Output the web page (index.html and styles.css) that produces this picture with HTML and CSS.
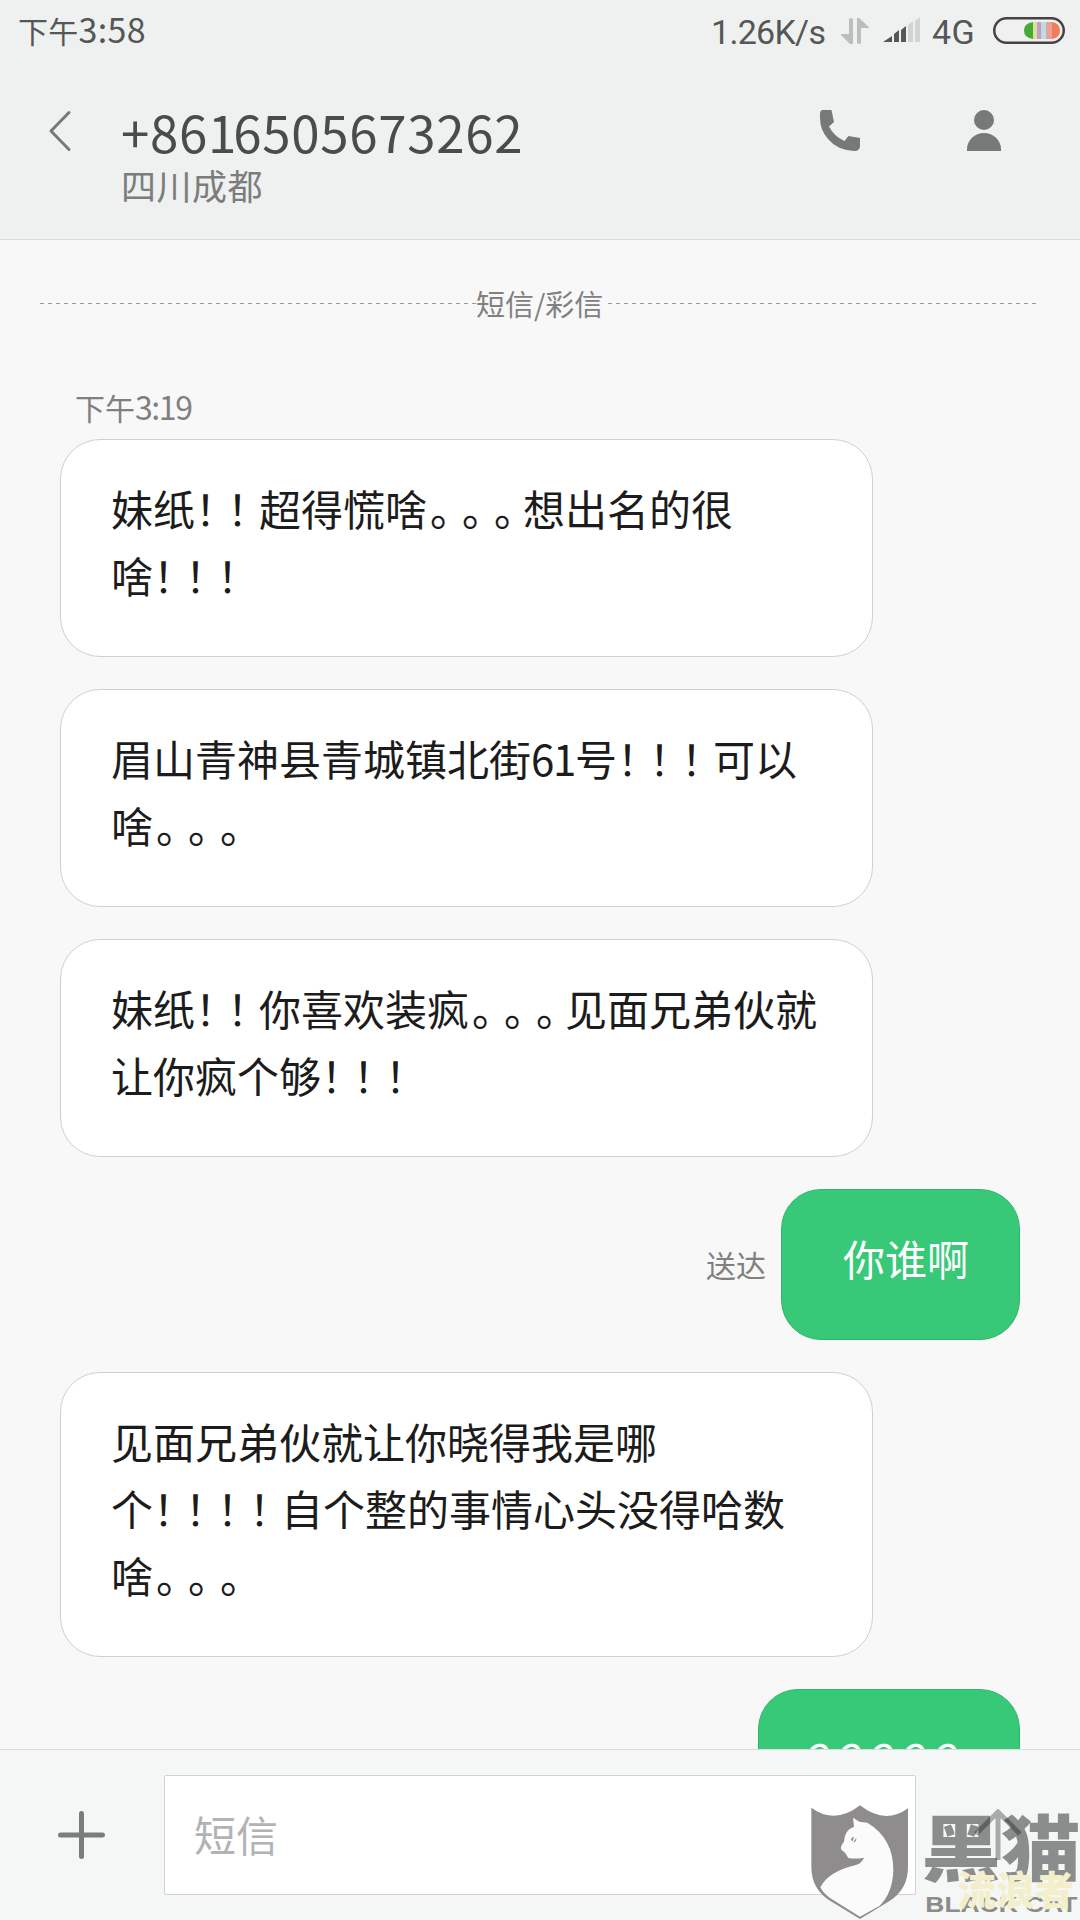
FILE: index.html
```html
<!DOCTYPE html>
<html lang="zh-CN">
<head>
<meta charset="utf-8">
<title>短信</title>
<link rel="stylesheet" href="styles.css">
</head>
<body>
<div class="screen">
  <header class="header">
    <div class="status">
      <div class="clock">下午<span class="clock-num">3:58</span></div>
      <div class="status-right">
        <span class="speed">1.26K/s</span>
        <svg class="traffic" width="28" height="28" viewBox="0 0 28 28" fill="#bcbebd"><path d="M8 2q0-2 2-2t2 2v24H9L0 17v-1h8zM16 2l0-2h2l10 9v1h-8v15q0 1-2 1t-2-2z"/></svg>
        <svg class="signal" width="38" height="26" viewBox="0 0 38 26"><path fill="#555756" d="M0 25l9-6v6zM11 17l5-4v12h-5zM18 13l5-4v16h-5z"/><path fill="#d2d4d3" d="M25 8l5-4v21h-5zM32 4l5-4v25h-5z"/></svg>
        <span class="net">4G</span>
        <svg class="battery" width="72" height="27" viewBox="0 0 72 27"><rect x="1.25" y="1.25" width="69.5" height="24.5" rx="12.25" fill="none" stroke="#474344" stroke-width="2.5"/><path fill="#48aa35" d="M40 5v17Q31 21 31 13.500T40 5z"/><path fill="#dfdf9c" d="M40 5h4v17h-4z"/><path fill="#c49ccb" d="M44 5h4.500v17H44z"/><path fill="#b9dfe3" d="M48.500 5H53v17h-4.500z"/><path fill="#eaa199" d="M53 5h6v17h-6z"/><path fill="#ef7d59" d="M59 5q8 1 8 8.500T59 22z"/></svg>
      </div>
    </div>
    <div class="titlebar">
      <svg class="back" width="24" height="44" viewBox="0 0 24 44"><path d="M21 3.500L3 22l18 18.500" fill="none" stroke="#777978" stroke-width="3" stroke-linecap="round" stroke-linejoin="round"/></svg>
      <div class="contact">
        <div class="number">+86<span class="one">1</span>6505673262</div>
        <div class="place">四川成都</div>
      </div>
      <svg class="phone" width="40" height="41" viewBox="0 0 40 41"><path fill="#777978" d="M2 0h9.500l2.500 12-5 4.500q5 10 15.500 14.500l4-5L40 28v8q0 5-6 5Q17 40 8 29 0 20 0 8V3q0-2 2-3z"/></svg>
      <svg class="person" width="34" height="41" viewBox="0 0 34 41" fill="#777978"><circle cx="17" cy="10" r="10"/><path d="M0 41v-2a17 16 0 0 1 34 0v2z"/></svg>
    </div>
  </header>

  <main class="thread">
    <div class="divider"><i class="dash"></i><span class="divider-label">短信/彩信</span><i class="dash dash-right"></i></div>
    <div class="time">下午<span class="time-num">3:19</span></div>
    <div class="bubble in">妹纸<span class="p">！！</span>超得慌啥<span class="p stop">。。。</span>想出名的很<br>啥<span class="p">！！！</span></div>
    <div class="bubble in">眉山青神县青城镇北街<span class="n">61</span>号<span class="p">！！！</span>可以<br>啥<span class="p stop">。。。</span></div>
    <div class="bubble in">妹纸<span class="p">！！</span>你喜欢装疯<span class="p stop">。。。</span>见面兄弟伙就<br>让你疯个够<span class="p">！！！</span></div>
    <div class="sent"><span class="state">送达</span><div class="bubble out">你谁啊</div></div>
    <div class="bubble in">见面兄弟伙就让你晓得我是哪<br>个<span class="p">！！！！</span>自个整的事情心头没得哈数<br>啥<span class="p stop">。。。</span></div>
    <div class="sent"><div class="bubble out questions"><span class="p">？？？？？</span></div></div>
  </main>

  <footer class="composer">
    <svg class="plus" width="47" height="48" viewBox="0 0 47 48"><path d="M23.500 2.500v43M2.500 24h42" stroke="#7b7d7c" stroke-width="5" stroke-linecap="round"/></svg>
    <div class="field">短信</div>
    <svg class="send" width="50" height="52" viewBox="0 0 50 52" fill="none" stroke="#a9abaa" stroke-width="5"><path d="M3 25L25 3l22 22M25 3v48"/></svg>
  </footer>

  <div class="watermark">
    <svg width="300" height="260" viewBox="0 0 900 780">
      <path fill="#8f8c8d" d="M94 443Q165 495 240 436Q315 495 384 445V620Q384 690 325 725L240 777L155 725Q94 690 94 620z"/>
      <path fill="#fff" fill-opacity=".97" d="M219 473l19 12 24 3Q340 535 340 630Q338 700 298 738L240 770L150 714Q130 700 121 682Q145 635 225 616Q245 610 252 593Q225 598 205 594Q198 578 183 568Q181 558 192 545Q193 510 222 500z"/>
      <path fill="#8f8c8d" d="M213 540q1-9 9-9l-4 13zM220 547q9 0 9-14z"/>
      <text class="brand" x="424" y="646" textLength="478" lengthAdjust="spacingAndGlyphs">黑猫</text>
      <text class="latin" x="436" y="755" textLength="456" lengthAdjust="spacingAndGlyphs">BLACK CAT</text>
      <text class="user" x="532" y="736" textLength="350" lengthAdjust="spacingAndGlyphs">流浪者</text>
    </svg>
  </div>
</div>
</body>
</html>
```
FILE: styles.css
```css
* { box-sizing: border-box; }

body {
  margin: 0;
  background: #f8f8f8;
  font-family: "Noto Sans CJK SC", sans-serif;
  text-spacing-trim: space-all;
  font-kerning: none;
}

svg { display: block; flex: none; }

.screen {
  position: relative;
  display: flex;
  flex-direction: column;
  width: 1080px;
  height: 1920px;
  overflow: hidden;
}

.header {
  flex: none;
  height: 240px;
  background: #eff1f0;
  border-bottom: 1px solid #d8dbda;
}

.status {
  display: flex;
  justify-content: space-between;
  align-items: center;
  height: 60px;
  padding: 0 15px 0 18px;
  color: #555756;
}

.clock { font-size: 30px; line-height: 58px; letter-spacing: .3px; }
.clock-num { font-size: 34px; line-height: 1; }

.status-right { display: flex; align-items: center; }
.speed, .net { font-family: Roboto, sans-serif; font-size: 34px; line-height: 60px; padding-top: 3px; }
.speed { width: 130px; letter-spacing: -.7px; }
.traffic { margin: 4px 0 0; }
.signal { margin-left: 14px; }
.net { width: 61px; margin-left: 11px; letter-spacing: .5px; }

.titlebar {
  display: flex;
  align-items: flex-start;
  padding-left: 48px;
}
.back { margin-top: 49px; }
.contact { width: 748px; padding-left: 49px; }
.number {
  margin-top: 38px;
  font-size: 51px;
  line-height: 66px;
  letter-spacing: .7px;
  color: #4a4c4b;
}
.one { letter-spacing: -3px; }
.place { margin-top: 1px; font-size: 35px; line-height: 40px; letter-spacing: .5px; color: #7b7d7c; }
.phone { margin: 50px 0 0; }
.person { margin: 50px 0 0 107px; }

.thread {
  display: flex;
  flex-direction: column;
  gap: 32px;
  height: 1509px;
  overflow: hidden;
  padding: 0 60px;
}

.divider {
  display: flex;
  align-items: center;
  flex: none;
  height: 40px;
  margin: 43px -20px 0;
  color: #808080;
}
.divider-label { font-size: 29px; line-height: 40px; }
.dash {
  width: 436px;
  height: 1px;
  background: repeating-linear-gradient(90deg, #999 0 4px, transparent 4px 8px);
}
.dash-right { width: 432px; margin-left: auto; }

.time {
  flex: none;
  height: 40px;
  margin: 32px 0 -20px;
  padding-left: 15px;
  font-size: 30px;
  line-height: 40px;
  color: #808080;
}
.time-num { font-size: 32px; line-height: 1; letter-spacing: -1.4px; }

.bubble {
  flex: none;
  padding: 34px 50px 48px;
  border: 1px solid #d0d0d0;
  border-radius: 40px;
  font-size: 42px;
  line-height: 67px;
  white-space: nowrap;
}
.in { width: 813px; background: #fff; color: #1c1c1c; }
.out {
  width: 239px;
  padding-left: 61px;
  background: #37c978;
  border-color: #33b56c;
  color: #fff;
}
.questions { width: 262px; padding-left: 50px; }

.p { letter-spacing: -10px; }
.stop { margin: 0 -3px 0 3px; }
.n { letter-spacing: -1.3px; }

.sent { display: flex; flex: none; justify-content: flex-end; }
.state { margin-right: 15px; font-size: 30px; line-height: 150px; height: 151px; color: #808080; }

.composer {
  display: flex;
  flex: none;
  align-items: flex-start;
  height: 171px;
  padding-left: 58px;
  background: #f5f7f6;
  border-top: 1px solid #dadcdb;
}
.plus { margin-top: 61px; }
.field {
  width: 752px;
  height: 120px;
  margin: 25px 0 0 59px;
  padding-left: 29px;
  background: #fff;
  border: 1px solid #d0d3d2;
  border-radius: 2px;
  font-size: 42px;
  line-height: 116px;
  color: #b3b3b3;
}
.send { margin: 59px 0 0 57px; }

/* Brand mark floats over the bottom-right corner. */
.watermark { position: absolute; right: 0; bottom: 0; }
.brand { font-size: 214px; font-weight: 900; fill: #000; fill-opacity: .43; }
.latin { font: bold 64px "Liberation Sans", sans-serif; fill: #8c8c8c; }
.user { font-size: 120px; font-weight: 900; fill: #f3efcb; }
```
